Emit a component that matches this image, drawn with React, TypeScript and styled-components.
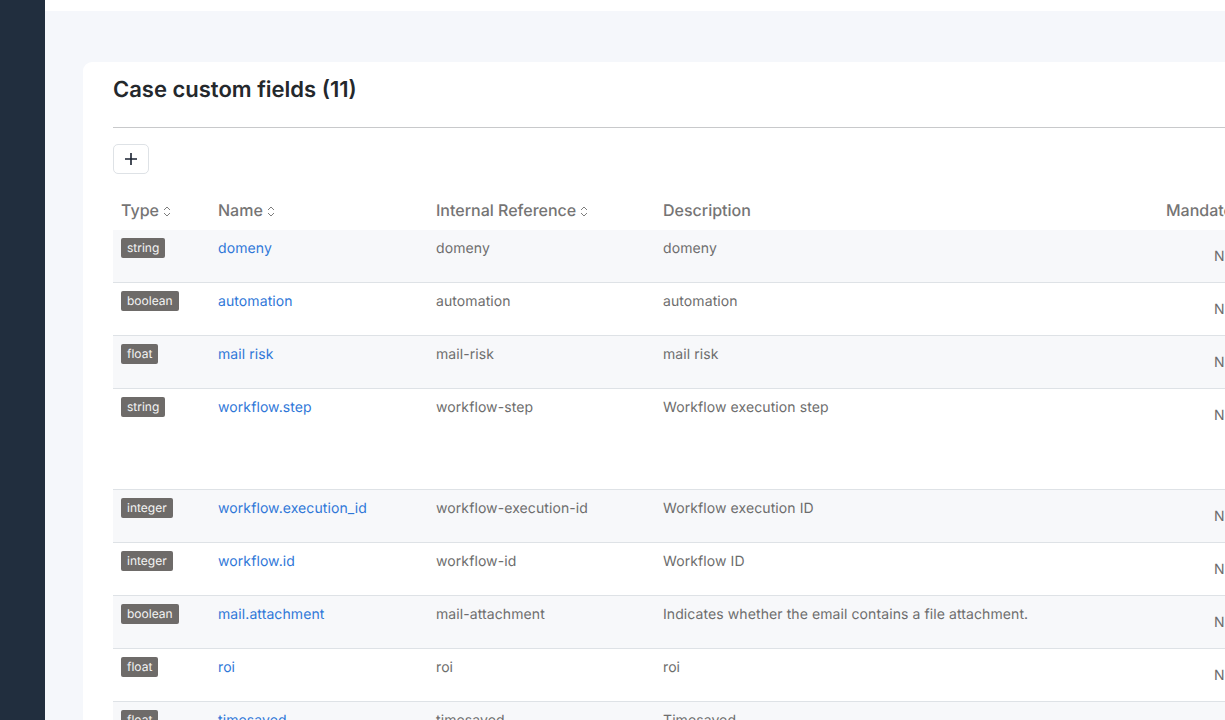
import React from 'react';
import styled, { createGlobalStyle } from 'styled-components';

interface Field {
  type: string;
  name: string;
  reference: string;
  description: string;
  tall?: boolean;
}

const fields: Field[] = [
  { type: 'string', name: 'domeny', reference: 'domeny', description: 'domeny' },
  { type: 'boolean', name: 'automation', reference: 'automation', description: 'automation' },
  { type: 'float', name: 'mail risk', reference: 'mail-risk', description: 'mail risk' },
  { type: 'string', name: 'workflow.step', reference: 'workflow-step', description: 'Workflow execution step', tall: true },
  { type: 'integer', name: 'workflow.execution_id', reference: 'workflow-execution-id', description: 'Workflow execution ID' },
  { type: 'integer', name: 'workflow.id', reference: 'workflow-id', description: 'Workflow ID' },
  { type: 'boolean', name: 'mail.attachment', reference: 'mail-attachment', description: 'Indicates whether the email contains a file attachment.' },
  { type: 'float', name: 'roi', reference: 'roi', description: 'roi' },
  { type: 'float', name: 'timesaved', reference: 'timesaved', description: 'Timesaved' },
];

const GlobalStyle = createGlobalStyle`
  html, body {
    margin: 0;
    height: 100%;
    overflow: hidden;
    background: #fff;
    font-family: Inter, "Liberation Sans", sans-serif;
    text-rendering: geometricPrecision;
    -webkit-font-smoothing: antialiased;
  }
`;

const Layout = styled.div`
  display: flex;
  width: 1225px;
  height: 720px;
  overflow: hidden;
`;

const Sidebar = styled.aside`
  flex: 0 0 45px;
  background: #212e3e;
`;

const Main = styled.main`
  flex: 1;
  min-width: 0;
  margin-top: 11px;
  padding: 51px 0 0 38px;
  background: #f5f7fb;
  overflow: hidden;
`;

const Card = styled.section`
  width: 1300px;
  padding: 0 30px;
  background: #fff;
  border-radius: 9px 0 0 0;
`;

const Title = styled.h1`
  margin: 0;
  height: 66px;
  padding-top: 14px;
  box-sizing: border-box;
  border-bottom: 1px solid #c8c9cb;
  color: #24282c;
  font-size: 22px;
  line-height: 29px;
  font-weight: 560;
`;

const AddButton = styled.button`
  display: flex;
  align-items: center;
  justify-content: center;
  width: 36px;
  height: 30px;
  margin: 16px 0;
  padding: 0;
  background: #fff;
  border: 1px solid #dee2e6;
  border-radius: 5px;
  color: #1a2230;
`;

const Table = styled.table`
  width: 1240px;
  table-layout: fixed;
  border-collapse: collapse;
  font-size: 14px;
  line-height: 21px;
  letter-spacing: 0.09px;
`;

const HeadCell = styled.th<{ $width: number; $inset?: number }>`
  width: ${(p) => p.$width}px;
  height: 40px;
  padding: 1px 8px 0 ${(p) => p.$inset ?? 8}px;
  box-sizing: border-box;
  text-align: left;
  color: #757474;
  font-size: 16px;
  font-weight: 500;
  letter-spacing: 0;
  white-space: nowrap;
`;

const SortIcon = styled.svg`
  margin-left: 4px;
  vertical-align: -1px;
`;

const Row = styled.tr<{ $tall?: boolean }>`
  height: ${(p) => (p.$tall ? 101 : 53)}px;
  border-bottom: 1px solid #dee2e6;
  &:first-child {
    height: 52px;
  }
  &:nth-child(odd) {
    background: #f7f8fa;
  }
`;

const Cell = styled.td`
  padding: 8px 8px 0;
  box-sizing: border-box;
  vertical-align: top;
  color: #6d6d6d;
  white-space: nowrap;
`;

const CenterCell = styled(Cell)`
  padding: 16px 8px 0 64px;
`;

const TypeBadge = styled.span`
  display: inline-block;
  height: 20px;
  padding: 0 6px;
  background: #6e6b69;
  border-radius: 2px;
  color: #f4f4f4;
  font-size: 12px;
  line-height: 19px;
  letter-spacing: 0;
  vertical-align: top;
`;

const NameLink = styled.a`
  color: #2f77d8;
  text-decoration: none;
`;

const Sort = () => (
  <SortIcon width="8" height="11" viewBox="0 0 8 11" fill="none" stroke="#7d7d7d" strokeWidth="1" aria-hidden="true">
    <path d="M1 4 L4 1 L7 4" />
    <path d="M1 7 L4 10 L7 7" />
  </SortIcon>
);

const App: React.FC = () => (
  <>
    <GlobalStyle />
    <Layout>
      <Sidebar />
      <Main>
        <Card>
          <Title>Case custom fields (11)</Title>
          <AddButton type="button" aria-label="Add">
            <svg width="14" height="14" viewBox="0 0 14 14" stroke="currentColor" strokeWidth="1.6" aria-hidden="true">
              <path d="M7 1 V13 M1 7 H13" />
            </svg>
          </AddButton>
          <Table>
            <thead>
              <tr>
                <HeadCell $width={97}>Type<Sort /></HeadCell>
                <HeadCell $width={218}>Name<Sort /></HeadCell>
                <HeadCell $width={227}>Internal Reference<Sort /></HeadCell>
                <HeadCell $width={495}>Description</HeadCell>
                <HeadCell $width={203} $inset={16}>Mandatory</HeadCell>
              </tr>
            </thead>
            <tbody>
              {fields.map((field) => (
                <Row key={field.reference} $tall={field.tall}>
                  <Cell><TypeBadge>{field.type}</TypeBadge></Cell>
                  <Cell><NameLink href="#">{field.name}</NameLink></Cell>
                  <Cell>{field.reference}</Cell>
                  <Cell>{field.description}</Cell>
                  <CenterCell>No</CenterCell>
                </Row>
              ))}
            </tbody>
          </Table>
        </Card>
      </Main>
    </Layout>
  </>
);

export default App;
